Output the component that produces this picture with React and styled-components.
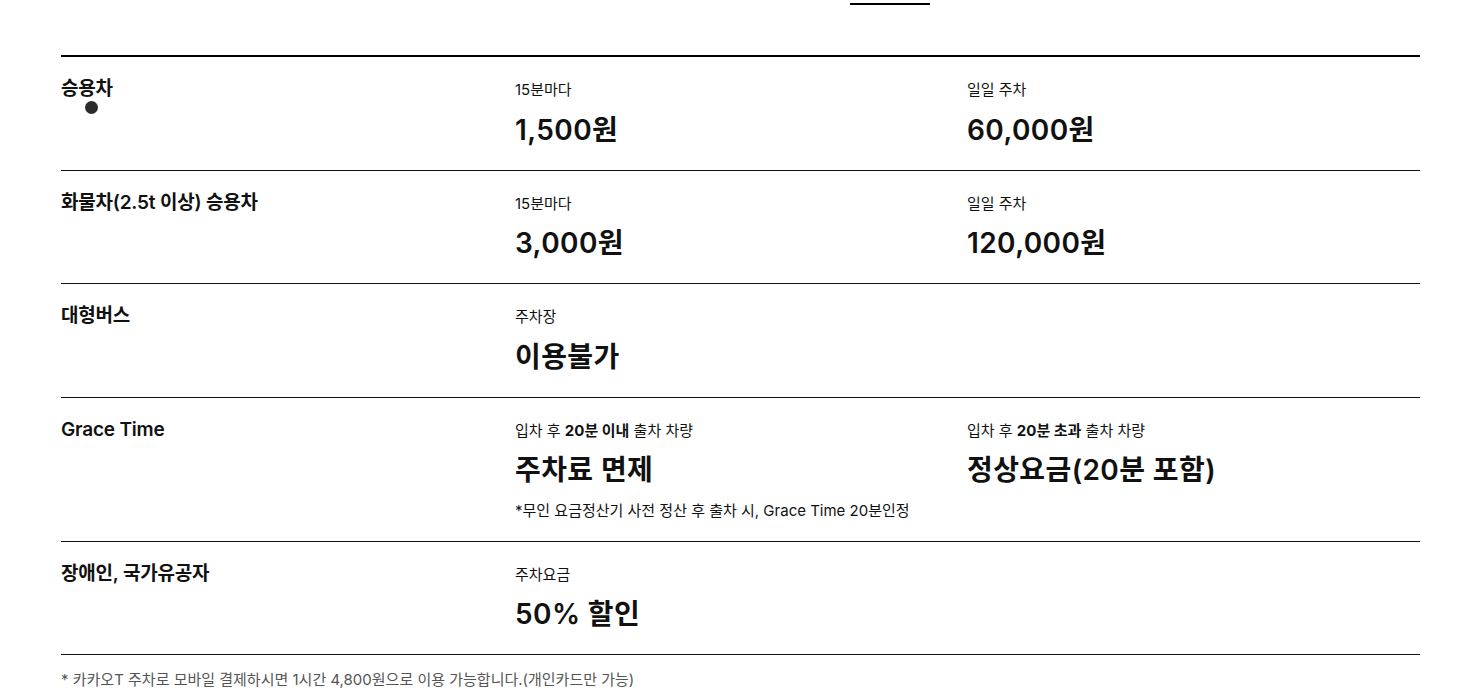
import React from "react";
import styled, { createGlobalStyle } from "styled-components";

const Global = createGlobalStyle`
  html, body { margin: 0; padding: 0; background: #fff; }
  body {
    font-family: Inter, "Noto Sans CJK KR", "Noto Sans", sans-serif;
    color: #111;
  }
`;

const Page = styled.div`
  width: 1359px;
  margin-left: 61px;
`;

const TabStrip = styled.div`
  height: 55px;
  display: flex;
  align-items: flex-start;
  padding-left: 789px;
  padding-top: 3px;
  box-sizing: border-box;
`;

const TabIndicator = styled.div`
  width: 80px;
  height: 2px;
  background: #000;
`;

const Table = styled.div`
  border-top: 2px solid #000;
`;

const Row = styled.div`
  position: relative;
  display: grid;
  grid-template-columns: 454px 452px 1fr;
  padding: 22px 0 ${(p) => p.$pb ?? 20}px;
  border-bottom: 1px solid #111;
`;

const Title = styled.div`
  font-size: 19px;
  font-weight: 600;
  line-height: 20px;
  letter-spacing: -0.2px;
`;

const Cell = styled.div`
  display: flex;
  flex-direction: column;
`;

const Label = styled.div`
  font-size: 15px;
  line-height: 22.5px;
  b { font-weight: 700; }
`;

const Price = styled.div`
  font-size: 28px;
  font-weight: 600;
  line-height: 40px;
  margin-top: 8px;
  letter-spacing: 0.4px;
`;

const Note = styled.div`
  font-size: 15px;
  line-height: 22.5px;
  margin-top: 10px;
`;

const Cursor = styled.span`
  position: absolute;
  left: 24px;
  top: 44px;
  width: 13px;
  height: 13px;
  border-radius: 50%;
  background: #2b2b2b;
`;

const Footnote = styled.p`
  margin: 14px 0 0;
  font-size: 15px;
  line-height: 22.5px;
  color: #555;
`;

const rows = [
  {
    title: "승용차",
    cursor: true,
    cells: [
      { label: "15분마다", price: "1,500원" },
      { label: "일일 주차", price: "60,000원" },
    ],
  },
  {
    title: "화물차(2.5t 이상) 승용차",
    cells: [
      { label: "15분마다", price: "3,000원" },
      { label: "일일 주차", price: "120,000원" },
    ],
  },
  {
    title: "대형버스",
    cells: [{ label: "주차장", price: "이용불가" }],
  },
  {
    title: "Grace Time",
    pb: 18,
    cells: [
      {
        label: (
          <>
            입차 후 <b>20분 이내</b> 출차 차량
          </>
        ),
        price: "주차료 면제",
        note: "*무인 요금정산기 사전 정산 후 출차 시, Grace Time 20분인정",
      },
      {
        label: (
          <>
            입차 후 <b>20분 초과</b> 출차 차량
          </>
        ),
        price: "정상요금(20분 포함)",
      },
    ],
  },
  {
    title: "장애인, 국가유공자",
    cells: [{ label: "주차요금", price: "50% 할인" }],
  },
];

export default function App() {
  return (
    <>
      <Global />
      <Page>
        <TabStrip>
          <TabIndicator />
        </TabStrip>
        <Table>
          {rows.map((r, i) => (
            <Row key={i} $pb={r.pb}>
              <Title>{r.title}</Title>
              {r.cells.map((c, j) => (
                <Cell key={j}>
                  <Label>{c.label}</Label>
                  <Price>{c.price}</Price>
                  {c.note && <Note>{c.note}</Note>}
                </Cell>
              ))}
              {r.cursor && <Cursor />}
            </Row>
          ))}
        </Table>
        <Footnote>
          * 카카오T 주차로 모바일 결제하시면 1시간 4,800원으로 이용 가능합니다.(개인카드만 가능)
        </Footnote>
      </Page>
    </>
  );
}
